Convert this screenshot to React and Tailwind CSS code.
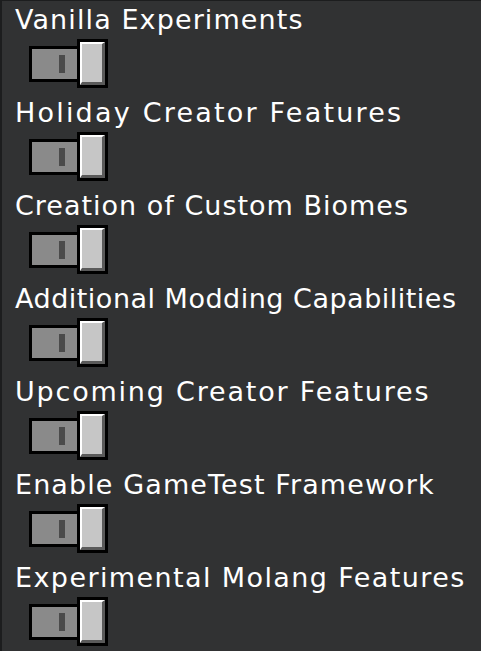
import React from 'react';

const experiments = [
  { name: 'Vanilla Experiments', tracking: 'tracking-[1.1px]' },
  { name: 'Holiday Creator Features', tracking: 'tracking-[2.2px]' },
  { name: 'Creation of Custom Biomes', tracking: 'tracking-[1px]' },
  { name: 'Additional Modding Capabilities', tracking: 'tracking-[0.5px]' },
  { name: 'Upcoming Creator Features', tracking: 'tracking-[1.8px]' },
  { name: 'Enable GameTest Framework', tracking: 'tracking-[1.1px]' },
  { name: 'Experimental Molang Features', tracking: 'tracking-[1.4px]' },
];

const Toggle = () => (
  <div className="flex items-center ml-[14px] h-[49px]">
    {/* track, its right side sits under the knob */}
    <div className="w-[48px] h-[36px] border-l-[3px] border-t-[3px] border-b-[3px] border-black bg-[#8a8a8a] pl-[27px] pt-[6px]">
      <div className="w-[6px] h-[18px] bg-[#4b4b4b]" />
    </div>
    <div className="w-[31px] h-[49px] border-[3px] border-black">
      <div className="w-full h-full bg-[#c6c6c6] border-l-2 border-t-2 border-white border-r-[3px] border-b-[3px] border-r-[#5a5a5a] border-b-[#5a5a5a]" />
    </div>
  </div>
);

const App = () => {
  return (
    <div className="w-[481px] h-[651px] overflow-hidden bg-[#313233] border-l-2 border-t border-[#1c1d1e]">
      {experiments.map(({ name, tracking }) => (
        <div key={name} className="h-[93px] pt-[4px] pl-[13px]">
          <p
            className={`text-white text-[27px] leading-[30px] whitespace-nowrap ${tracking}`}
            style={{ fontFamily: '"DejaVu Sans", sans-serif' }}
          >
            {name}
          </p>
          <div className="mt-[4px]">
            <Toggle />
          </div>
        </div>
      ))}
    </div>
  );
};

export default App;
